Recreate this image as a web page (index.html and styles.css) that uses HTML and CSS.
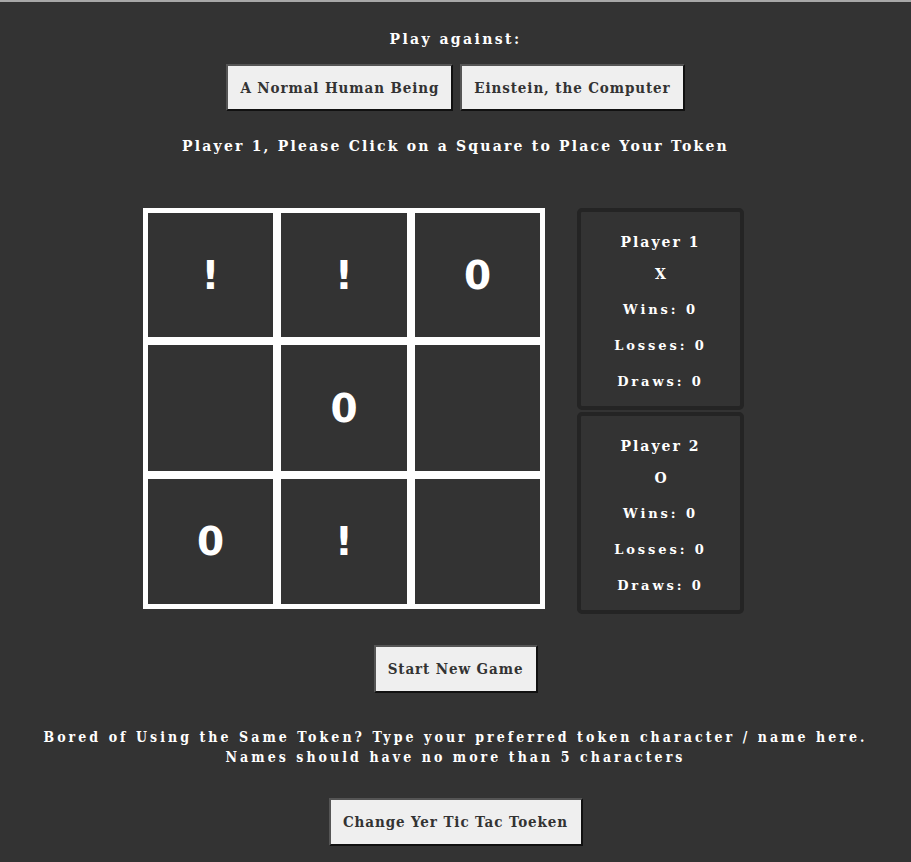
FILE: index.html
```html
<!DOCTYPE html>
<html>
<head>
<meta charset="utf-8">
<link rel="stylesheet" href="styles.css">
</head>
<body>
<div class="page">
  <p class="label">Play against:</p>
  <div class="modes">
    <button class="btn">A Normal Human Being</button>
    <button class="btn">Einstein, the Computer</button>
  </div>
  <p class="status">Player 1, Please Click on a Square to Place Your Token</p>
  <div class="game">
    <div class="board">
      <div class="cell">!</div>
      <div class="cell">!</div>
      <div class="cell">0</div>
      <div class="cell"></div>
      <div class="cell">0</div>
      <div class="cell"></div>
      <div class="cell">0</div>
      <div class="cell">!</div>
      <div class="cell"></div>
    </div>
    <div class="scores">
      <div class="card">
        <p class="name">Player 1</p>
        <p class="token">X</p>
        <p class="stat">Wins: 0</p>
        <p class="stat">Losses: 0</p>
        <p class="stat">Draws: 0</p>
      </div>
      <div class="card">
        <p class="name">Player 2</p>
        <p class="token">O</p>
        <p class="stat">Wins: 0</p>
        <p class="stat">Losses: 0</p>
        <p class="stat">Draws: 0</p>
      </div>
    </div>
  </div>
  <button class="btn new">Start New Game</button>
  <p class="hint">Bored of Using the Same Token? Type your preferred token character / name here.<br>Names should have no more than 5 characters</p>
  <button class="btn change">Change Yer Tic Tac Toeken</button>
</div>
</body>
</html>
```
FILE: styles.css
```css
html, body {
  margin: 0;
  padding: 0;
  background: #333333;
}
body {
  border-top: 2px solid #a8a8a8;
  min-height: 860px;
  font-family: "DejaVu Serif", serif;
  color: #ffffff;
}
.page {
  display: flex;
  flex-direction: column;
  align-items: center;
}
p { margin: 0; }
.label {
  margin-top: 28px;
  font-size: 14px;
  font-weight: bold;
  letter-spacing: 2.4px;
  line-height: 18px;
}
.modes {
  display: flex;
  gap: 7px;
  margin-top: 16px;
}
.btn {
  background: #efefef;
  color: #333333;
  font-family: "DejaVu Serif Condensed", "DejaVu Serif", serif;
  font-weight: bold;
  font-size: 15px;
  letter-spacing: 0.9px;
  height: 47px;
  padding: 0 12px;
  border: 2px solid;
  border-color: #555555 #111111 #111111 #555555;
  cursor: pointer;
}
.status {
  margin-top: 26px;
  font-size: 14px;
  font-weight: bold;
  letter-spacing: 2.2px;
  line-height: 18px;
}
.game {
  display: flex;
  align-items: flex-start;
  gap: 32px;
  margin-top: 53px;
  align-self: flex-start;
  margin-left: 143px;
}
.board {
  display: grid;
  grid-template-columns: 125px 126px 125px;
  grid-template-rows: 124px 126px 125px;
  gap: 8px;
  padding: 5px;
  background: #ffffff;
}
.cell {
  background: #333333;
  display: flex;
  align-items: center;
  justify-content: center;
  font-family: "DejaVu Sans", sans-serif;
  font-weight: bold;
  font-size: 39px;
  color: #ffffff;
}
.scores {
  display: flex;
  flex-direction: column;
  gap: 2px;
}
.card {
  width: 159px;
  border: 4px solid #242424;
  border-radius: 5px;
  display: flex;
  flex-direction: column;
  align-items: center;
  padding-top: 20px;
  height: 174px;
}
.name {
  font-size: 14px;
  font-weight: bold;
  letter-spacing: 2px;
  line-height: 20px;
}
.token {
  font-size: 14px;
  font-weight: bold;
  line-height: 20px;
  margin-top: 12px;
}
.stat {
  font-size: 13px;
  font-weight: bold;
  letter-spacing: 2.9px;
  line-height: 20px;
  margin-top: 16px;
}
.new {
  margin-top: 31px;
  width: 164px;
  height: 48px;
}
.hint {
  margin-top: 34px;
  font-family: "DejaVu Serif Condensed", "DejaVu Serif", serif;
  font-size: 14px;
  font-weight: bold;
  letter-spacing: 3.05px;
  line-height: 20px;
  text-align: center;
}
.change {
  margin-top: 31px;
  width: 254px;
  height: 48px;
}
```
